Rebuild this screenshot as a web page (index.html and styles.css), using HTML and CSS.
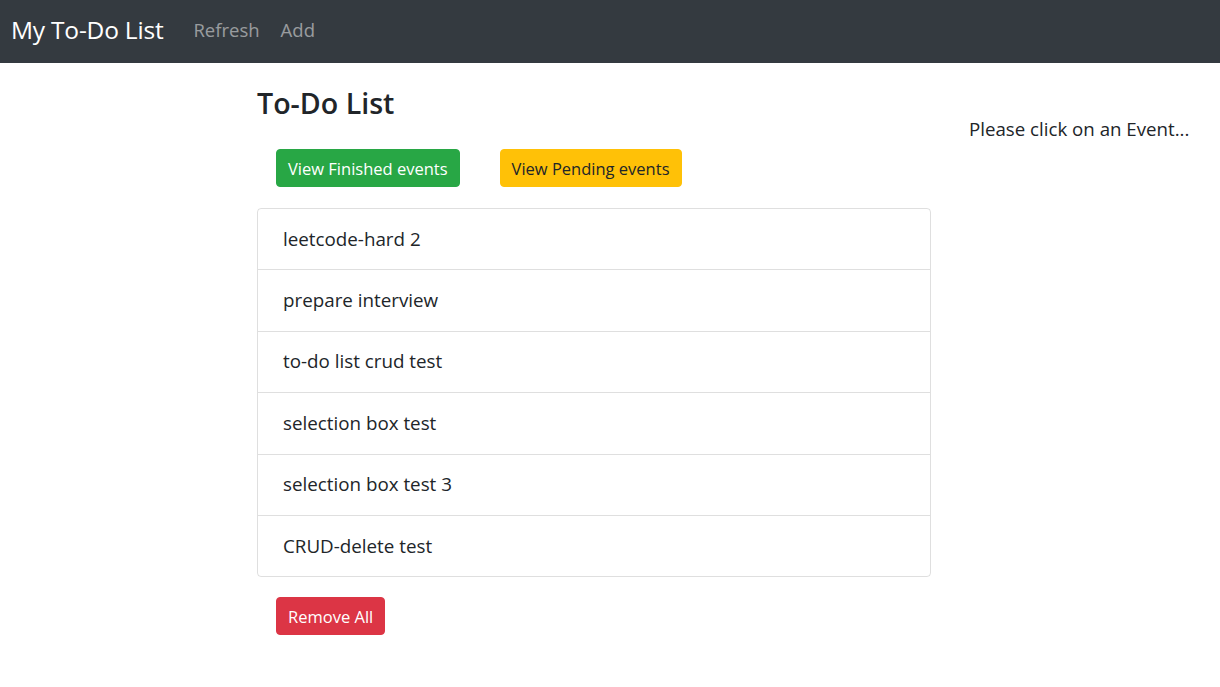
FILE: index.html
```html
<!DOCTYPE html>
<html lang="en">
<head>
<meta charset="utf-8">
<title>My To-Do List</title>
<link rel="stylesheet" href="styles.css">
</head>
<body>
<nav class="navbar">
  <a class="brand" href="#">My To-Do List</a>
  <div class="nav-links">
    <a class="nav-link" href="#">Refresh</a>
    <a class="nav-link" href="#">Add</a>
  </div>
</nav>
<div class="layout">
  <main class="main">
    <h3 class="title">To-Do List</h3>
    <div class="btn-row">
      <button class="btn btn-success">View Finished events</button>
      <button class="btn btn-warning">View Pending events</button>
    </div>
    <ul class="list-group">
      <li class="list-item">leetcode-hard 2</li>
      <li class="list-item">prepare interview</li>
      <li class="list-item">to-do list crud test</li>
      <li class="list-item">selection box test</li>
      <li class="list-item">selection box test 3</li>
      <li class="list-item">CRUD-delete test</li>
    </ul>
    <div class="btn-row bottom">
      <button class="btn btn-danger">Remove All</button>
    </div>
  </main>
  <aside class="side">
    <p class="hint">Please click on an Event...</p>
  </aside>
</div>
</body>
</html>
```

FILE: styles.css
```css
* { box-sizing: border-box; }
body {
  margin: 0;
  font-family: "Open Sans", "Noto Sans", "Liberation Sans", sans-serif;
  color: #212529;
  background: #fff;
}
.navbar {
  height: 63px;
  background: #343a40;
  display: flex;
  align-items: center;
  padding: 0 11px 4px;
}
.brand {
  color: #fff;
  text-decoration: none;
  font-size: 24.5px;
  margin-right: 30px;
  letter-spacing: -0.2px;
}
.nav-links { display: flex; gap: 21px; }
.nav-link {
  color: rgba(255,255,255,.5);
  text-decoration: none;
  font-size: 18.5px;
}
.layout {
  display: flex;
  padding-left: 257px;
}
.main { width: 674px; }
.title {
  margin: 21px 0 0;
  font-size: 28.6px;
  font-weight: 600;
  line-height: 38px;
}
.btn-row {
  display: flex;
  gap: 40px;
  padding-left: 19px;
  margin-top: 27px;
}
.btn-row.bottom { margin-top: 20px; }
.btn {
  font-family: inherit;
  font-size: 16.5px;
  height: 38px;
  padding: 0 11px;
  border: 1px solid transparent;
  border-radius: 4px;
  cursor: pointer;
}
.btn-success { background: #28a745; border-color: #28a745; color: #fff; }
.btn-warning { background: #ffc107; border-color: #ffc107; color: #212529; }
.btn-danger { background: #dc3545; border-color: #dc3545; color: #fff; }
.list-group {
  list-style: none;
  margin: 21px 0 0;
  padding: 0;
  border: 1px solid rgba(0,0,0,.125);
  border-radius: 4px;
}
.list-item {
  padding: 16.7px 25px;
  line-height: 27px;
  font-size: 18.8px;
}
.list-item + .list-item { border-top: 1px solid rgba(0,0,0,.125); }
.side { padding-left: 38px; }
.hint {
  margin: 52px 0 0;
  font-size: 18.7px;
  line-height: 27px;
}
```
